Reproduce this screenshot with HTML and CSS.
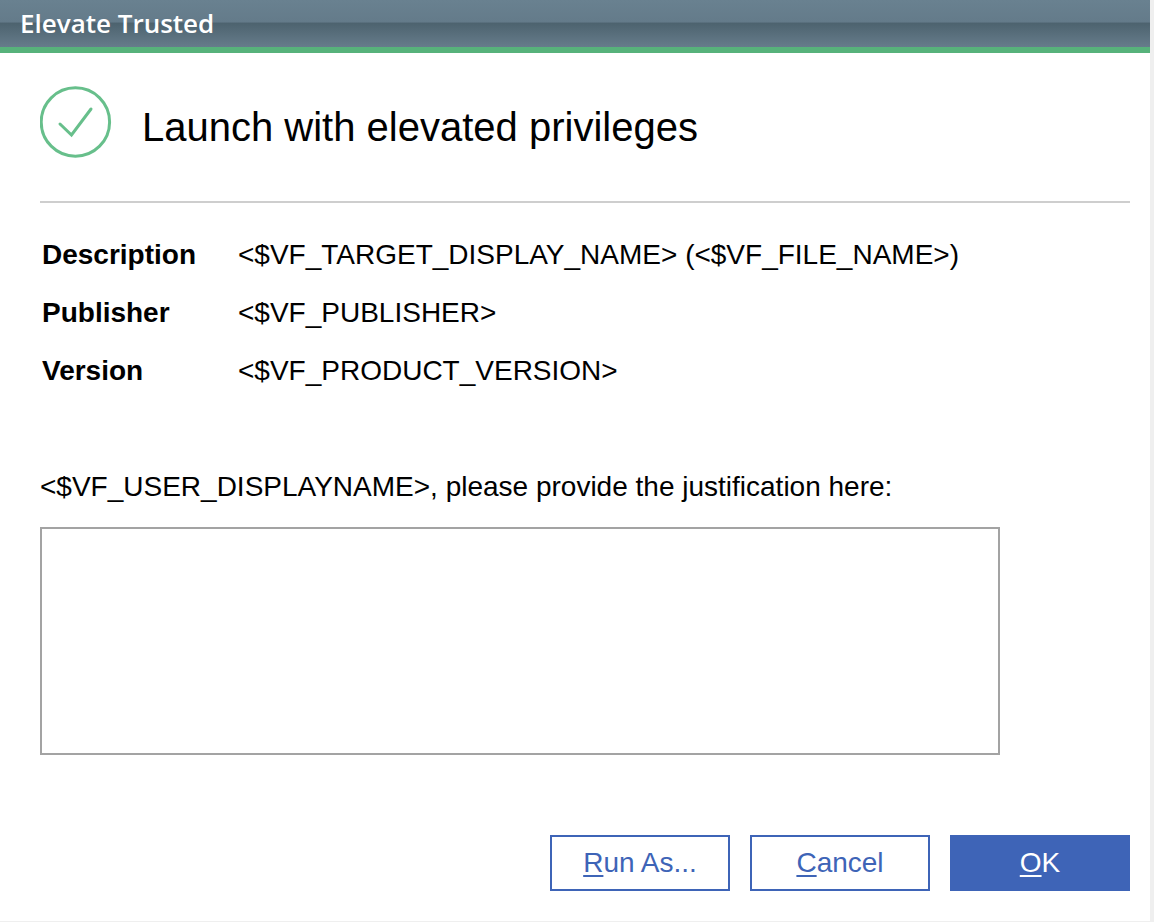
FILE: index.html
```html
<!DOCTYPE html>
<html lang="en">
<head>
<meta charset="utf-8">
<title>Elevate Trusted</title>
<link rel="stylesheet" href="styles.css">
</head>
<body>
<main class="dialog">
  <header class="titlebar">Elevate Trusted</header>
  <form class="content">
    <div class="banner">
      <svg class="banner-icon" viewBox="0 0 72 72" aria-hidden="true">
        <circle cx="35.4" cy="36" r="34.2"/>
        <path d="M20 38 L31.5 49 L51 23"/>
      </svg>
      <h1 class="heading">Launch with elevated privileges</h1>
    </div>
    <table class="details">
      <tr><th scope="row">Description</th><td>&lt;$VF_TARGET_DISPLAY_NAME&gt; (&lt;$VF_FILE_NAME&gt;)</td></tr>
      <tr><th scope="row">Publisher</th><td>&lt;$VF_PUBLISHER&gt;</td></tr>
      <tr><th scope="row">Version</th><td>&lt;$VF_PRODUCT_VERSION&gt;</td></tr>
    </table>
    <label class="prompt" for="justification">&lt;$VF_USER_DISPLAYNAME&gt;, please provide the justification here:</label>
    <textarea class="justification" id="justification"></textarea>
    <div class="actions">
      <button class="button" type="button"><span class="key">R</span>un As...</button>
      <button class="button" type="button"><span class="key">C</span>ancel</button>
      <button class="button primary" type="button"><span class="key">O</span>K</button>
    </div>
  </form>
</main>
</body>
</html>
```

FILE: styles.css
```css
* {
  box-sizing: border-box;
}

body {
  margin: 0;
  padding: 0 4px 1px 0;
  min-height: 100vh;
  display: flex;
  background: #efefef;
  color: #000;
  font: 28px/32px "Liberation Sans", Arial, sans-serif;
}

.dialog {
  flex: 1;
  display: flex;
  flex-direction: column;
  background: #fff;
}

.titlebar {
  padding: 5px 20px 6px;
  border-bottom: 6px solid #57b27b;
  background: linear-gradient(#698190 0%, #647b8a 46%, #4d636f 50%, #667c8b 100%);
  color: #fff;
  font: 600 26px/36px "Open Sans", sans-serif;
}

.content {
  flex: 1;
  display: flex;
  flex-direction: column;
  padding: 0 20px 30px 40px;
}

.banner {
  display: flex;
  align-items: center;
  gap: 30px;
  padding: 33px 0 43px;
  border-bottom: 2px solid #cecece;
}

.banner-icon {
  width: 72px;
  height: 72px;
  fill: none;
  stroke: #67bf8b;
  stroke-width: 3;
  stroke-linecap: round;
}

.heading {
  margin: 0;
  padding-top: 10px;
  font-size: 40px;
  font-weight: 400;
  line-height: 48px;
}

.details {
  margin-top: 23px;
  border-collapse: collapse;
}

.details th,
.details td {
  height: 58px;
  padding: 0 0 0 2px;
  text-align: left;
}

.details th {
  width: 196px;
}

.prompt {
  margin: 71px 0 24px;
}

.justification {
  width: 100%;
  max-width: 960px;
  height: 228px;
  padding: 8px;
  border: 2px solid #a3a3a3;
  border-radius: 0;
  background: #fff;
  font: inherit;
  resize: none;
}

.actions {
  display: flex;
  justify-content: flex-end;
  gap: 20px;
  margin-top: auto;
}

.button {
  width: 180px;
  height: 56px;
  padding: 0;
  border: 2px solid #3e64b7;
  background: #fff;
  color: #3e64b7;
  font: inherit;
}

.primary {
  background: #3e64b7;
  color: #fff;
}

.key {
  text-decoration: underline;
  text-decoration-thickness: 2px;
  text-underline-offset: 3px;
}
```
